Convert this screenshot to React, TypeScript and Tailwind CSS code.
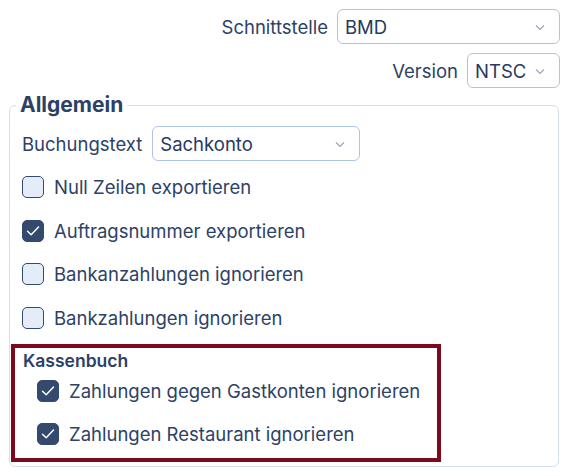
import React from "react";

const font = { fontFamily: 'Inter, "Open Sans", "Liberation Sans", sans-serif' };

function Chevron() {
  return (
    <svg width="14" height="14" viewBox="0 0 14 14" className="shrink-0">
      <path d="M3 5.5 L7 9.5 L11 5.5" fill="none" stroke="#9aa7b8" strokeWidth="1.2" />
    </svg>
  );
}

function Select({ value, w }: { value: string; w: string }) {
  return (
    <div
      className={`flex items-center justify-between h-[35px] rounded-[6px] border border-[#aec4e4] bg-white pl-[7px] pr-[12px] text-[18.5px] leading-[24px] text-[#253a5e] ${w}`}
    >
      <span>{value}</span>
      <Chevron />
    </div>
  );
}

function Check({ checked, label }: { checked: boolean; label: string }) {
  return (
    <div className="flex items-center gap-[10px] h-[22px] text-[18.5px] leading-[24px] text-[#2c4266]">
      <div
        className={`w-[22px] h-[22px] shrink-0 rounded-[5px] border-[1.5px] border-[#34496e] flex items-center justify-center ${
          checked ? "bg-[#34496e]" : "bg-[#e4ecf7]"
        }`}
      >
        {checked && (
          <svg width="18" height="18" viewBox="0 0 18 18">
            <path d="M3.5 9.2 L7.2 12.8 L14.5 5" fill="none" stroke="white" strokeWidth="1.5" strokeLinecap="round" strokeLinejoin="round" />
          </svg>
        )}
      </div>
      <span>{label}</span>
    </div>
  );
}

export default function App() {
  return (
    <div className="w-[569px] h-[476px] bg-white text-[#2c4266]" style={font}>
      <div className="flex flex-col items-end pr-[9px] pt-[9px] gap-[9px]">
        <div className="flex items-center gap-[9px]">
          <span className="text-[18.5px] leading-[24px]">Schnittstelle</span>
          <Select value="BMD" w="w-[223px]" />
        </div>
        <div className="flex items-center gap-[9px]">
          <span className="text-[18.5px] leading-[24px]">Version</span>
          <Select value="NTSC" w="w-[93px]" />
        </div>
      </div>
      <fieldset className="ml-[9px] mr-[10px] mt-[4px] rounded-[6px] border border-[#d6dee9] px-[1px] pb-[4px] pt-0">
        <legend className="ml-[5px] px-[4px] text-[21px] font-bold text-[#2b4166] leading-[26px]">Allgemein</legend>
        <div className="flex flex-col">
          <div className="flex items-center gap-[10px] pl-[11px] mt-[8px]">
            <span className="text-[18.5px] leading-[24px]">Buchungstext</span>
            <Select value="Sachkonto" w="w-[208px]" />
          </div>
          <div className="flex flex-col gap-[21.7px] pl-[11px] mt-[15px]">
            <Check checked={false} label="Null Zeilen exportieren" />
            <Check checked={true} label="Auftragsnummer exportieren" />
            <Check checked={false} label="Bankanzahlungen ignorieren" />
            <Check checked={false} label="Bankzahlungen ignorieren" />
          </div>
          <div className="mt-[15px] w-[430px] border-[4px] border-[#7d0a1c] pl-[8px] pt-[3px] pb-[13px]">
            <div className="text-[17.5px] font-semibold text-[#2b4166] leading-[20px]">Kassenbuch</div>
            <div className="flex flex-col gap-[21px] pl-[14px] mt-[9px]">
              <Check checked={true} label="Zahlungen gegen Gastkonten ignorieren" />
              <Check checked={true} label="Zahlungen Restaurant ignorieren" />
            </div>
          </div>
        </div>
      </fieldset>
    </div>
  );
}
